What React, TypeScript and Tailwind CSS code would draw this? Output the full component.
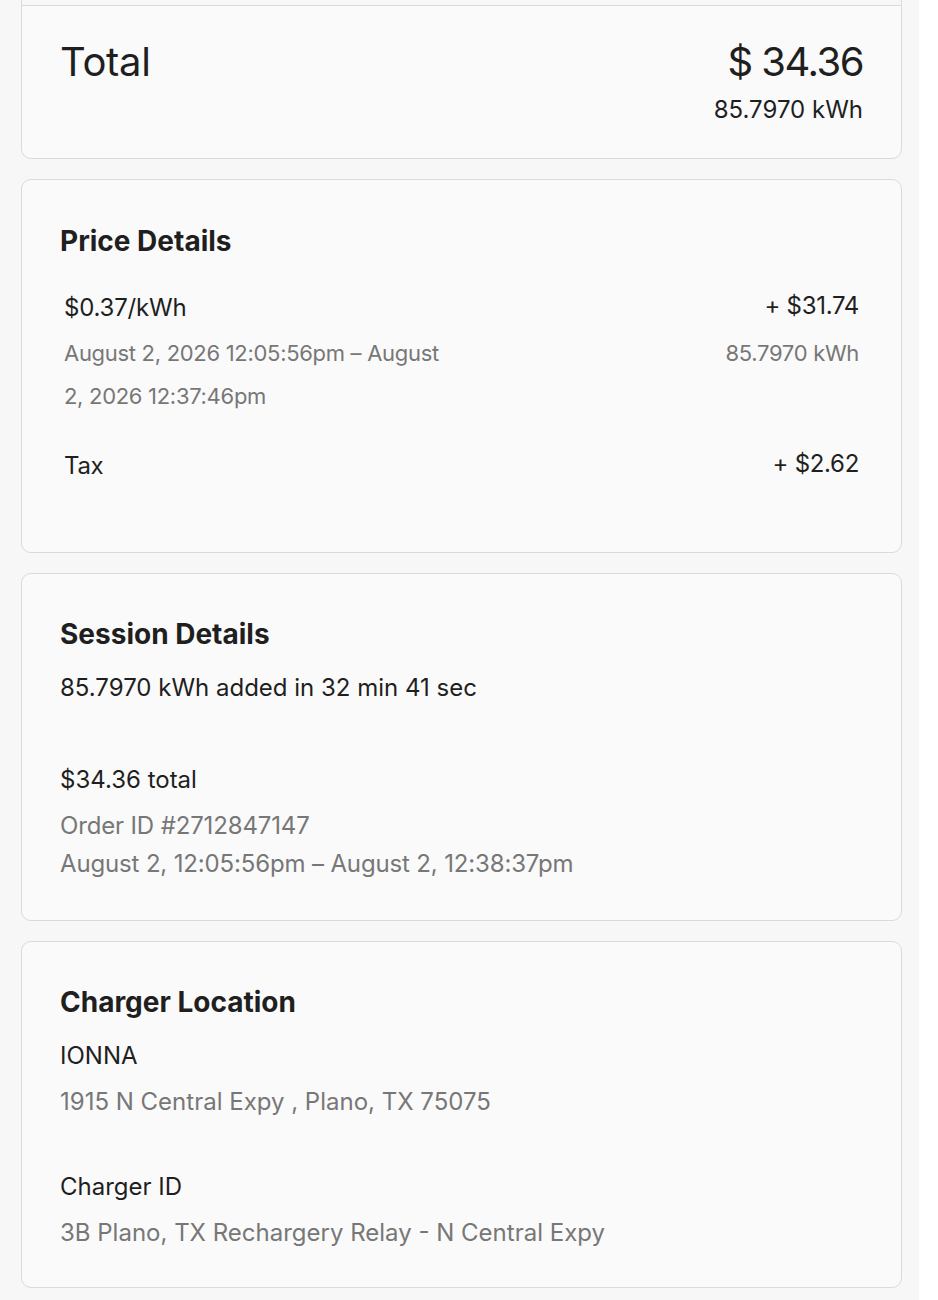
import React from "react";

const font = { fontFamily: "Inter, 'Noto Sans', sans-serif" };

function Card({ children, className = "" }: { children: React.ReactNode; className?: string }) {
  return (
    <div className={`rounded-[10px] border border-[#dadada] bg-[#fafafa] px-[38px] ${className}`}>
      {children}
    </div>
  );
}

export default function App() {
  return (
    <div className="min-h-[1300px] w-full bg-white" style={font}>
      <div className="min-h-[1300px] w-[919px] bg-[#f7f7f7] pl-[21px] pr-[17px] text-[#1f1f1f]">
        <div className="h-[5px] border-x border-[#dadada]" />
        <div className="rounded-b-[10px] border border-[#dadada] bg-[#fafafa] px-[38px] pt-[32px] pb-[32px]">
          <div className="flex items-start justify-between">
            <div className="text-[40px] leading-[48px] tracking-[-0.3px]">Total</div>
            <div className="flex flex-col items-end">
              <div className="text-[40px] leading-[48px] tracking-[-1.5px]">$ 34.36</div>
              <div className="mt-[8px] text-[24px] leading-[32px]">85.7970 kWh</div>
            </div>
          </div>
        </div>

        <Card className="mt-[20px] pt-[45px] pb-[70px]">
          <div className="text-[28px] font-bold leading-[32px]">Price Details</div>
          <div className="mt-[35px] flex justify-between px-[4px]">
            <div className="w-[390px]">
              <div className="text-[24px] leading-[32px] tracking-[-0.2px]">$0.37/kWh</div>
              <div className="mt-[8px] text-[22px] leading-[43px] tracking-[-0.3px] text-[#777777]">
                August 2, 2026 12:05:56pm – August 2, 2026 12:37:46pm
              </div>
            </div>
            <div className="flex flex-col items-end">
              <div className="-mt-[2px] text-[24px] leading-[32px] tracking-[-0.3px]">+ $31.74</div>
              <div className="mt-[10px] text-[22px] leading-[43px] tracking-[-0.3px] text-[#777777]">85.7970 kWh</div>
            </div>
          </div>
          <div className="mt-[32px] flex justify-between px-[4px]">
            <div className="text-[24px] leading-[32px] tracking-[-0.3px]">Tax</div>
            <div className="-mt-[2px] text-[24px] leading-[32px] tracking-[-0.3px]">+ $2.62</div>
          </div>
        </Card>

        <Card className="mt-[20px] pt-[44px] pb-[37px]">
          <div className="text-[28px] font-bold leading-[32px]">Session Details</div>
          <div className="mt-[22px] text-[24px] leading-[32px]">85.7970 kWh added in 32 min 41 sec</div>
          <div className="mt-[60px] text-[24px] leading-[32px]">$34.36 total</div>
          <div className="mt-[11px] text-[24px] leading-[38px] tracking-[-0.15px] text-[#777777]">
            <div>Order ID #2712847147</div>
            <div>August 2, 12:05:56pm – August 2, 12:38:37pm</div>
          </div>
        </Card>

        <Card className="mt-[20px] pt-[44px] pb-[38px]">
          <div className="text-[28px] font-bold leading-[32px]">Charger Location</div>
          <div className="mt-[22px] text-[24px] leading-[32px]">IONNA</div>
          <div className="mt-[14px] text-[24px] leading-[32px] text-[#777777]">
            1915 N Central Expy , Plano, TX 75075
          </div>
          <div className="mt-[53px] text-[24px] leading-[32px]">Charger ID</div>
          <div className="mt-[14px] text-[24px] leading-[32px] text-[#777777]">
            3B Plano, TX Rechargery Relay - N Central Expy
          </div>
        </Card>
      </div>
    </div>
  );
}
